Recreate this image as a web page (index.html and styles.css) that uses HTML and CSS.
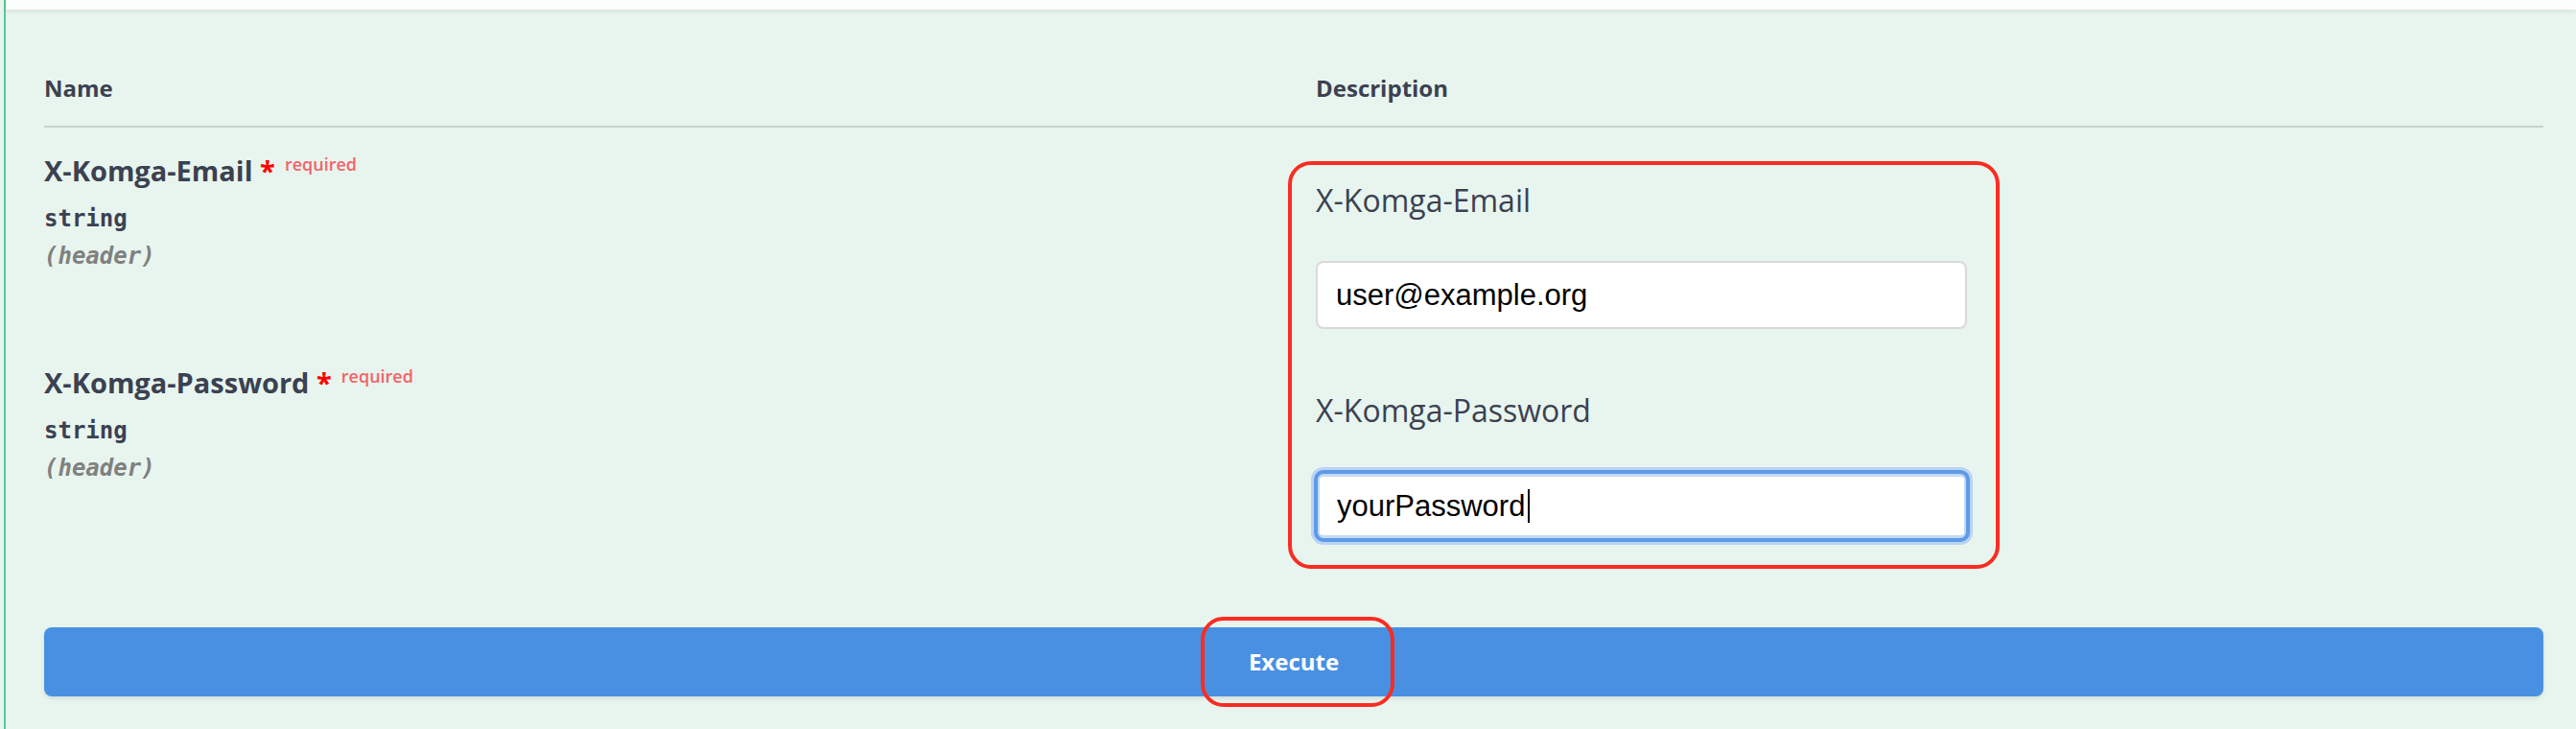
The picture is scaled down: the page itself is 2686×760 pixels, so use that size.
FILE: index.html
```html
<!DOCTYPE html>
<html lang="en">
<head>
<meta charset="utf-8">
<title>Parameters</title>
<link rel="stylesheet" href="styles.css">
</head>
<body>
<div class="opblock">
  <div class="section-header"></div>
  <div class="parameters">
    <div class="params-head">
      <div class="col-name">Name</div>
      <div class="col-desc">Description</div>
    </div>
    <div class="params-body">
      <div class="names">
        <div class="param">
          <div class="param-name">X-Komga-Email&nbsp;<span class="star">*</span><span class="required">required</span></div>
          <div class="param-type">string</div>
          <div class="param-in">(header)</div>
        </div>
        <div class="param">
          <div class="param-name">X-Komga-Password&nbsp;<span class="star">*</span><span class="required">required</span></div>
          <div class="param-type">string</div>
          <div class="param-in">(header)</div>
        </div>
      </div>
      <div class="desc-col">
        <div class="desc-box">
          <div class="desc-label">X-Komga-Email</div>
          <div class="field">user@example.org</div>
          <div class="desc-label second">X-Komga-Password</div>
          <div class="field focused">yourPassword<span class="caret"></span></div>
        </div>
      </div>
    </div>
  </div>
  <div class="execute-wrapper">
    <button class="btn-execute">Execute<span class="mark"></span></button>
  </div>
</div>
</body>
</html>
```
FILE: styles.css
```css
* {
  box-sizing: border-box;
}

html,
body {
  margin: 0;
  padding: 0;
}

body {
  width: 2686px;
  height: 760px;
  overflow: hidden;
  background: #e8f5ee;
  font-family: "Open Sans", "Liberation Sans", sans-serif;
  color: #3b4151;
}

.opblock {
  margin-left: 4px;
  height: 760px;
  border-left: 2px solid #55c995;
  background: #e8f5ee;
}

.section-header {
  height: 10px;
  background: #fcfdfd;
  box-shadow: 0 2px 4px rgba(0, 0, 0, 0.08);
  position: relative;
}

.parameters {
  margin: 0 34px 0 40px;
  padding-top: 67px;
}

.params-head {
  display: grid;
  grid-template-columns: 1297px 1fr;
  padding-bottom: 24px;
  border-bottom: 2px solid #c6d1ce;
  font-size: 24px;
  line-height: 30px;
  font-weight: 700;
}

.params-head .col-desc {
  padding-left: 29px;
}

.params-body {
  display: grid;
  grid-template-columns: 1297px 1fr;
  align-items: start;
}

.names {
  padding-top: 26.5px;
  display: flex;
  flex-direction: column;
  gap: 93.5px;
}

.param-name {
  font-size: 29px;
  line-height: 36px;
  font-weight: 700;
  white-space: nowrap;
}

.star {
  color: #ff0000;
}

.required {
  font-size: 18px;
  line-height: 18px;
  font-weight: 600;
  color: #f2636a;
  padding-left: 10px;
  vertical-align: 11px;
}

.param-type,
.param-in {
  font-family: "DejaVu Sans Mono", "Liberation Mono", monospace;
  font-size: 24px;
  line-height: 39px;
  font-weight: 600;
}

.param-type {
  margin-top: 13.5px;
}

.param-in {
  font-style: italic;
  color: #808080;
}

.desc-box {
  margin-top: 35px;
  width: 742px;
  border: 4px solid #fb2c22;
  border-radius: 24px;
  padding: 17px 30px 28px 25px;
}

.desc-label {
  font-size: 32px;
  line-height: 40px;
  font-weight: 400;
  white-space: nowrap;
}

.desc-label.second {
  margin-top: 65px;
}

.field {
  display: flex;
  align-items: center;
  height: 71px;
  margin-top: 43px;
  padding-left: 19px;
  background: #ffffff;
  border: 2px solid #d9d9d9;
  border-radius: 8px;
  font-family: "Liberation Sans", Arial, sans-serif;
  font-size: 31px;
  color: #000000;
}

.field.focused {
  height: 67px;
  margin: 46px 1px 0 2px;
  padding-left: 18px;
  border-width: 3px 2px;
  border-color: #c3d9f6;
  border-radius: 6px;
  box-shadow: 0 0 0 4px #5e9ae8, 0 0 0 7px #bad3f4;
}

.caret {
  display: inline-block;
  width: 2px;
  height: 35px;
  margin-left: 3px;
  background: #000000;
}

.execute-wrapper {
  margin: 61px 34px 0 40px;
}

.btn-execute {
  position: relative;
  display: block;
  width: 100%;
  height: 72px;
  padding: 0;
  border: 0;
  border-radius: 8px;
  background: #4990e2;
  box-shadow: 0 2px 4px rgba(0, 0, 0, 0.1);
  font-family: "Open Sans", "Liberation Sans", sans-serif;
  font-size: 24px;
  line-height: 30px;
  font-weight: 700;
  color: #ffffff;
}

.mark {
  position: absolute;
  left: calc(50% - 97px);
  top: -11px;
  width: 202px;
  height: 94px;
  border: 4px solid #fb2c22;
  border-radius: 24px;
}
```
